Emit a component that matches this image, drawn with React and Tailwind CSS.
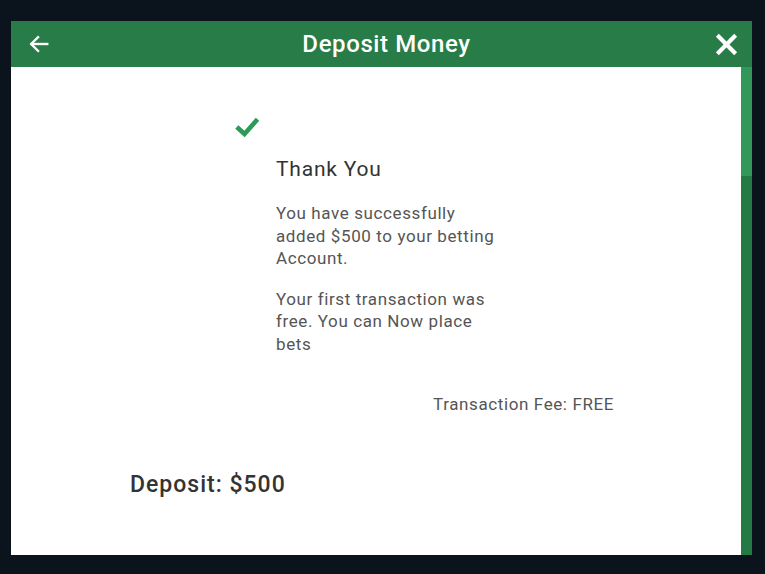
const ArrowLeft = () => (
  <svg width="22" height="22" viewBox="0 0 24 24" fill="none" stroke="white" strokeWidth="2.6" strokeLinecap="square">
    <path d="M21 12H4" />
    <path d="M11 4.5L3.5 12L11 19.5" />
  </svg>
);

const CloseX = () => (
  <svg width="23" height="23" viewBox="0 0 24 24" fill="none" stroke="white" strokeWidth="4.4" strokeLinecap="square">
    <path d="M4 4L20 20" />
    <path d="M20 4L4 20" />
  </svg>
);

const Check = () => (
  <svg width="24" height="22" viewBox="0 0 24 22" fill="none" stroke="#2d9a56" strokeWidth="4.6" strokeLinecap="square">
    <path d="M3.5 12.5L9.5 18L21 5" />
  </svg>
);

const App = () => {
  return (
    <div
      className="w-[765px] h-[574px] bg-[#0b131c] pt-[21px] pl-[11px]"
      style={{ fontFamily: "Roboto, 'Liberation Sans', sans-serif" }}
    >
      <div className="w-[741px] h-[534px] flex flex-col">
        {/* Header */}
        <div className="h-[46px] bg-[#277c47] flex items-center justify-between pl-[17px] pr-[14px]">
          <ArrowLeft />
          <h1 className="text-white text-[24px] font-medium tracking-[0.6px] ml-[8px]">Deposit Money</h1>
          <CloseX />
        </div>

        {/* Body */}
        <div className="flex flex-1 min-h-0">
          <div className="flex-1 bg-white">
            <div className="pl-[224px] pt-[49px]">
              <Check />
            </div>
            <div className="pl-[265px] pt-[17px]">
              <div className="w-[232px]">
                <h2 className="text-[#333333] text-[21px] leading-[28px] tracking-[0.8px]">Thank You</h2>
                <p className="text-[#555555] text-[17px] leading-[22.5px] tracking-[0.6px] mt-[19px]">
                  You have successfully added $500 to your betting Account.
                </p>
                <p className="text-[#555555] text-[17px] leading-[22.5px] tracking-[0.6px] mt-[18px]">
                  Your first transaction was free. You can Now place bets
                </p>
              </div>
            </div>
            <div className="flex justify-end pr-[127px] mt-[37px]">
              <span className="text-[#555555] text-[17px] tracking-[0.6px]">Transaction Fee: FREE</span>
            </div>
            <div className="pl-[119px] mt-[50px]">
              <span className="text-[#333333] text-[23px] font-medium tracking-[1px]">Deposit: $500</span>
            </div>
          </div>

          {/* Scrollbar */}
          <div className="w-[11px] bg-[#237a44]">
            <div className="h-[109px] bg-[#31985a]"></div>
          </div>
        </div>
      </div>
    </div>
  );
};

export default App;
